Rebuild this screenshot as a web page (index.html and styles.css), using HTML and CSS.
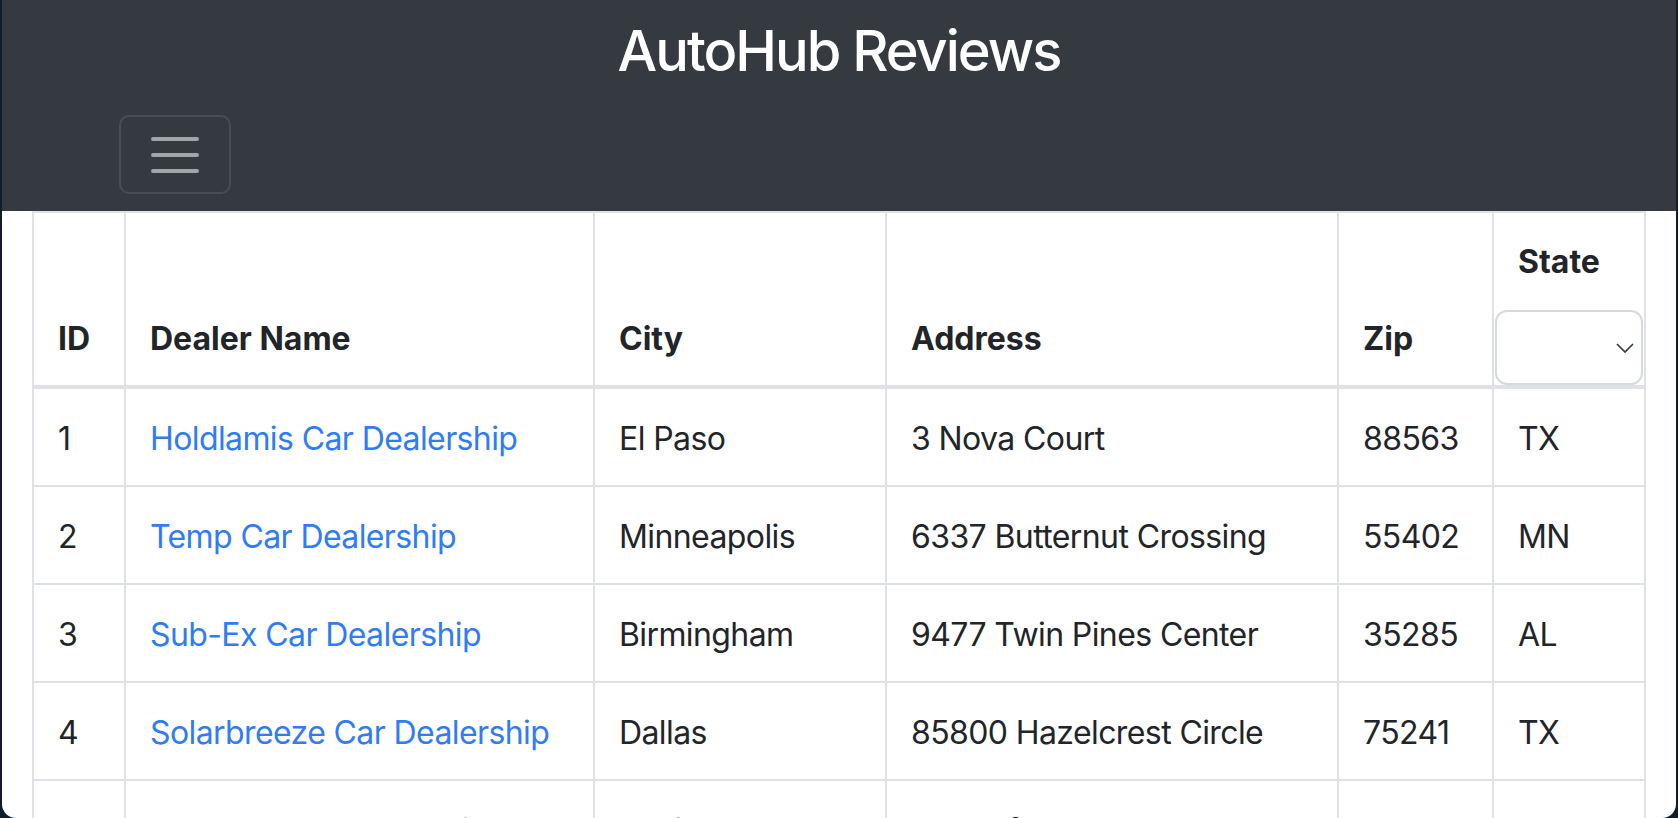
FILE: index.html
```html
<!DOCTYPE html>
<html lang="en">
<head>
<meta charset="utf-8">
<title>AutoHub Reviews</title>
<link rel="stylesheet" href="styles.css">
</head>
<body>
<div class="window">
  <header class="navbar">
    <h1 class="brand">AutoHub Reviews</h1>
    <div class="toggler-row">
      <button class="toggler" type="button" aria-label="Toggle navigation">
        <svg class="toggler-icon" width="60" height="60" viewBox="0 0 30 30" aria-hidden="true">
          <path d="M4 7h22M4 15h22M4 23h22" fill="none" stroke="rgba(255,255,255,0.55)" stroke-width="2" stroke-linecap="round"/>
        </svg>
      </button>
    </div>
  </header>
  <main class="content">
    <table class="dealers">
      <colgroup>
        <col class="c-id"><col class="c-name"><col class="c-city"><col class="c-addr"><col class="c-zip"><col class="c-state">
      </colgroup>
      <thead>
        <tr>
          <th>ID</th>
          <th>Dealer Name</th>
          <th>City</th>
          <th>Address</th>
          <th>Zip</th>
          <th class="state-th">
            <div class="state-label">State</div>
            <select class="state-select" aria-label="State"><option></option></select>
          </th>
        </tr>
      </thead>
      <tbody>
        <tr><td>1</td><td><a href="#">Holdlamis Car Dealership</a></td><td>El Paso</td><td>3 Nova Court</td><td>88563</td><td>TX</td></tr>
        <tr><td>2</td><td><a href="#">Temp Car Dealership</a></td><td>Minneapolis</td><td>6337 Butternut Crossing</td><td>55402</td><td>MN</td></tr>
        <tr><td>3</td><td><a href="#">Sub-Ex Car Dealership</a></td><td>Birmingham</td><td>9477 Twin Pines Center</td><td>35285</td><td>AL</td></tr>
        <tr><td>4</td><td><a href="#">Solarbreeze Car Dealership</a></td><td>Dallas</td><td>85800 Hazelcrest Circle</td><td>75241</td><td>TX</td></tr>
        <tr><td>5</td><td><a href="#">Regrant Car Dealership</a></td><td>Baltimore</td><td>93 Golf Course Pass</td><td>21203</td><td>MD</td></tr>
      </tbody>
    </table>
  </main>
</div>
</body>
</html>
```
FILE: styles.css
```css
html, body {
  margin: 0;
  padding: 0;
  height: 100%;
  overflow: hidden;
}
body {
  background: #0f1d2a;
  font-family: "Inter", "Noto Sans", sans-serif;
  color: #212529;
}
.window {
  margin-left: 2px;
  width: 1674px;
  height: 818px;
  background: #ffffff;
  overflow: hidden;
  border-radius: 0 0 14px 14px;
}
.navbar {
  background: #343a40;
  height: 211px;
  box-sizing: border-box;
  padding-top: 18px;
}
.brand {
  margin: 0;
  text-align: center;
  color: #ffffff;
  font-size: 56px;
  line-height: 67px;
  font-weight: 500;
  letter-spacing: -2px;
}
.toggler-row {
  display: flex;
  padding-left: 117px;
  margin-top: 30px;
}
.toggler {
  width: 112px;
  height: 79px;
  box-sizing: border-box;
  border: 2px solid rgba(255,255,255,0.1);
  border-radius: 10px;
  background: transparent;
  padding: 0;
  display: flex;
  align-items: center;
  justify-content: center;
}
.toggler-icon {
  display: block;
}
.content {
  padding: 0 30px;
}
.dealers {
  width: 1614px;
  table-layout: fixed;
  border-collapse: separate;
  border-spacing: 0;
  font-size: 32px;
  line-height: 48px;
}
.c-id { width: 94px; }
.c-name { width: 469px; }
.c-city { width: 292px; }
.c-addr { width: 452px; }
.c-zip { width: 155px; }
.c-state { width: 152px; }
.dealers th,
.dealers td {
  padding: 26px 24px 22px 24px;
  border-right: 2px solid #dee2e6;
  border-bottom: 2px solid #dee2e6;
  text-align: left;
  white-space: nowrap;
}
.dealers th:first-child,
.dealers td:first-child {
  border-left: 2px solid #dee2e6;
}
.dealers th {
  border-top: 2px solid #dee2e6;
  border-bottom: 4px solid #dee2e6;
  vertical-align: bottom;
  font-weight: 700;
}
.dealers td {
  vertical-align: top;
  font-weight: 400;
  letter-spacing: -0.6px;
}
.dealers a {
  color: #2f7cf6;
  text-decoration: none;
}
.dealers th.state-th {
  padding: 25px 1px 0 1px;
}
.state-label {
  padding-left: 23px;
}
.state-select {
  display: block;
  margin-top: 24px;
  width: 100%;
  height: 75px;
  box-sizing: border-box;
  border: 2px solid #d6dadf;
  border-radius: 12px;
  background-color: #ffffff;
  -webkit-appearance: none;
  appearance: none;
  font-family: inherit;
  font-size: 32px;
  background-image: url("data:image/svg+xml,%3Csvg xmlns='http://www.w3.org/2000/svg' width='18' height='10' viewBox='0 0 18 10'%3E%3Cpath d='M1 1l8 8 8-8' fill='none' stroke='%23343a40' stroke-width='1.7'/%3E%3C/svg%3E");
  background-repeat: no-repeat;
  background-position: right 7px center;
  background-size: 18px 10px;
}
```
